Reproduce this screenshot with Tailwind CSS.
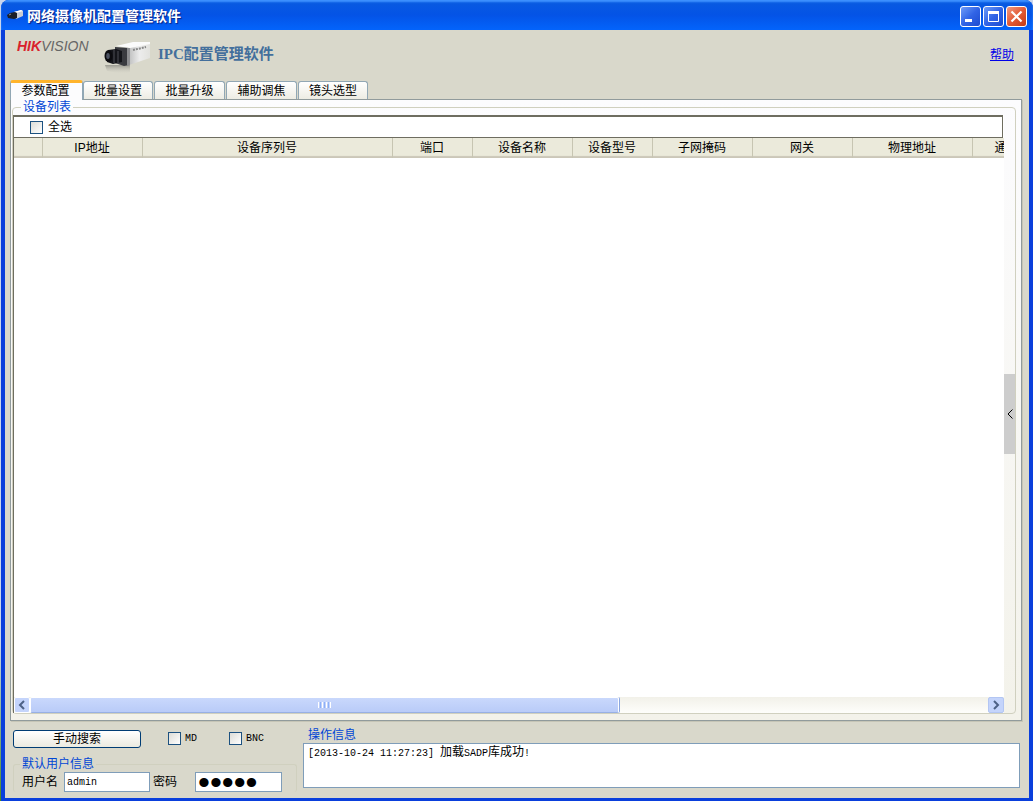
<!DOCTYPE html>
<html lang="zh-CN">
<head>
<meta charset="utf-8">
<meta name="viewport" content="width=device-width, initial-scale=1">
<title>网络摄像机配置管理软件</title>
<script src="https://cdn.jsdelivr.net/npm/@tailwindcss/browser@4"></script>
</head>
<body class="h-screen overflow-hidden bg-linear-to-b from-[#c9d6ee] from-80% to-[#4e8a1c] pl-px font-['Liberation_Sans','Noto_Sans_CJK_SC',sans-serif] text-xs text-black">
<div class="flex h-full flex-col overflow-hidden rounded-t-lg bg-[#0a3fdc]">

  <header class="flex h-[30px] shrink-0 items-center bg-linear-to-b from-[#0a5be0] via-[#0453e6] to-[#0364fc] pr-1.5 pl-1.5 shadow-[inset_0_2px_2px_#3f93ff]">
    <svg class="h-4 w-4 shrink-0" viewBox="0 0 16 16" aria-hidden="true">
      <path d="M7 5l7-2 2 1v5l-7 3z" fill="#c9ccd2"/><path d="M7 5l7-2 2 1-7 2z" fill="#fff"/>
      <path d="M0 8l3-2 5-1 2 1v5l-3 1-6-1z" fill="#1c1f26"/><path d="M2 8l2-1" stroke="#8a8f98"/>
    </svg>
    <h1 class="ml-1 flex-1 pt-0.5 text-sm leading-[20px] font-bold text-white [text-shadow:1px_1px_1px_#0a1f80]">网络摄像机配置管理软件</h1>
    <div class="mt-0.5 flex gap-0.5">
      <button type="button" aria-label="最小化" class="flex h-[21px] w-[21px] items-center justify-center rounded-[3px] border border-white bg-linear-to-br from-[#6f9bf7] via-[#3164e6] to-[#1d4bd0]">
        <svg class="h-[19px] w-[19px]" viewBox="0 0 19 19"><path d="M4 12h7v3H4z" fill="#fff"/></svg>
      </button>
      <button type="button" aria-label="最大化" class="flex h-[21px] w-[21px] items-center justify-center rounded-[3px] border border-white bg-linear-to-br from-[#6f9bf7] via-[#3164e6] to-[#1d4bd0]">
        <svg class="h-[19px] w-[19px]" viewBox="0 0 19 19"><path d="M4.500 5v9.500h10V5" fill="none" stroke="#fff"/><path d="M4 4h11v3H4z" fill="#fff"/></svg>
      </button>
      <button type="button" aria-label="关闭" class="flex h-[21px] w-[21px] items-center justify-center rounded-[3px] border border-white bg-linear-to-br from-[#f0997f] via-[#e25a35] to-[#c23a12]">
        <svg class="h-[19px] w-[19px]" viewBox="0 0 19 19"><path d="M4.500 4.500l10 10M14.500 4.500l-10 10" stroke="#fff" stroke-width="2.200"/></svg>
      </button>
    </div>
  </header>

  <main class="mr-1 mb-[3px] ml-1 flex min-h-0 flex-1 flex-col bg-[#d9d8cb]">
    <div class="flex h-[50px] shrink-0 pr-[15px] pl-3">
      <div class="mt-1.5 w-[71px] text-sm leading-[20px] font-bold text-[#d9222c] italic">HIK<span class="font-normal text-[#666]">VISION</span></div>
      <svg class="mt-2.5 ml-4 h-9 w-12" viewBox="0 0 48 36" aria-hidden="true">
        <defs>
          <linearGradient id="side" x1="0" y1="0" x2="1" y2="0"><stop offset="0" stop-color="#bfc0c0"/><stop offset=".5" stop-color="#ececec"/><stop offset="1" stop-color="#e2e2de"/></linearGradient>
          <linearGradient id="refl" x1="0" y1="0" x2="0" y2="1"><stop offset="0" stop-color="#8a8a82" stop-opacity=".8"/><stop offset="1" stop-color="#d9d8cb" stop-opacity="0"/></linearGradient>
        </defs>
        <path d="M1 25h25v7l-6 2-17-3z" fill="url(#refl)"/>
        <path d="M25 8l21-5v15l-21 7z" fill="url(#side)"/>
        <path d="M12 6l17-4 17 0v2l-20 4z" fill="#fbfbfb"/>
        <path d="M11 7l14 1v17l-5 1-9-3z" fill="#3a3b40"/>
        <path d="M23 8l3 0v17l-3 1z" fill="#8c8d90"/>
        <path d="M4 10l8-1 6 2v11l-9 2-6-2z" fill="#14151a"/>
        <ellipse cx="4.500" cy="16" rx="4" ry="6" fill="#0b0b0f"/>
        <ellipse cx="4" cy="16" rx="1.800" ry="3" fill="#4b5160"/>
        <path d="M10 10v13M14 11v12" stroke="#4c4e55"/>
        <path d="M29 10l13-3" stroke="#888" stroke-width="2" stroke-dasharray="2 1"/>
      </svg>
      <h2 class="mt-3.5 ml-1.5 flex-1 font-['Liberation_Serif','Noto_Sans_CJK_SC',serif] text-[15px] leading-[20px] font-bold text-[#436f9c]">IPC配置管理软件</h2>
      <a href="#help" class="mt-4 self-start leading-[19px] text-[#0000e8] underline">帮助</a>
    </div>

    <div role="tablist" class="flex h-[19px] shrink-0 items-end pl-[5px]">
      <button type="button" role="tab" aria-selected="true" class="z-10 -mb-px h-5 w-[73px] rounded-t-[3px] border-t-[3px] border-r border-l border-t-[#ffb42c] border-r-[#91a7b4] border-l-[#91a7b4] bg-[#fcfcfd] pr-0.5 pb-0.5 leading-[14px]">参数配置</button>
      <div class="flex gap-px">
        <button type="button" role="tab" aria-selected="false" class="h-[18px] w-[70px] rounded-t-[3px] border border-b-0 border-[#91a7b4] bg-linear-to-b from-white to-[#edece3] leading-[16px]">批量设置</button>
        <button type="button" role="tab" aria-selected="false" class="h-[18px] w-[71px] rounded-t-[3px] border border-b-0 border-[#91a7b4] bg-linear-to-b from-white to-[#edece3] leading-[16px]">批量升级</button>
        <button type="button" role="tab" aria-selected="false" class="h-[18px] w-[71px] rounded-t-[3px] border border-b-0 border-[#91a7b4] bg-linear-to-b from-white to-[#edece3] leading-[16px]">辅助调焦</button>
        <button type="button" role="tab" aria-selected="false" class="h-[18px] w-[70px] rounded-t-[3px] border border-b-0 border-[#91a7b4] bg-linear-to-b from-white to-[#edece3] leading-[16px]">镜头选型</button>
      </div>
    </div>

    <section role="tabpanel" class="mr-[7px] ml-[5px] flex min-h-0 flex-1 flex-col border border-[#919b9c] bg-linear-to-b from-[#fcfcfe] to-[#f3f2ea] pr-[5px] pb-1.5 pl-px shadow-[1px_1px_0_#c6c5b6]">
      <fieldset class="flex min-h-0 min-w-0 flex-1 flex-col rounded-[4px] border border-[#d0d0bf]">
        <legend class="ml-2 px-0.5 leading-[15px] text-[#0046d5]">设备列表</legend>
        <div class="flex min-h-0 flex-1">
          <div class="flex min-w-0 flex-1 flex-col border-l border-[#6e6d60] bg-white">
            <div class="mr-px flex h-[23px] shrink-0 items-center border border-t-2 border-l-0 border-[#6e6d60] pl-4">
              <label class="flex items-center gap-[5px] leading-[16px]"><input type="checkbox" class="h-[13px] w-[13px] appearance-none border border-[#1c5180] bg-linear-to-br from-[#dcdcd7] to-white">全选</label>
            </div>
            <div class="min-h-0 flex-1 overflow-hidden">
              <table class="w-[1040px] table-fixed border-collapse">
                <colgroup><col class="w-[28px]"><col class="w-[100px]"><col class="w-[250px]"><col class="w-[80px]"><col class="w-[100px]"><col class="w-[80px]"><col class="w-[100px]"><col class="w-[100px]"><col class="w-[120px]"><col></colgroup>
                <thead class="bg-[#ebeadb] shadow-[inset_0_-2px_1px_#cbc7b8]">
                  <tr class="h-5 leading-[19px] *:border-r *:border-[#c7c5b2] *:p-0 *:font-normal">
                    <th scope="col" aria-label="选择"></th><th scope="col">IP地址</th><th scope="col">设备序列号</th><th scope="col">端口</th><th scope="col">设备名称</th><th scope="col">设备型号</th><th scope="col">子网掩码</th><th scope="col">网关</th><th scope="col">物理地址</th><th scope="col" class="text-left"><span class="pl-[22px]">通</span></th>
                  </tr>
                </thead>
                <tbody></tbody>
              </table>
            </div>
            <div class="flex h-4 shrink-0 bg-linear-to-b from-[#f2f1e9] to-[#fefefb]">
              <button type="button" aria-label="向左滚动" class="flex w-4 items-center justify-center rounded-[2px] border border-white bg-[#c4d4fb]"><svg class="h-3 w-3" viewBox="0 0 12 12"><path d="M8 2L4 6l4 4" fill="none" stroke="#4d6185" stroke-width="2"/></svg></button>
              <div class="flex min-w-0 flex-1">
                <div class="flex flex-[588_588_0%] items-center justify-center gap-px rounded-[2px] border border-white border-b-[#98b0e4] bg-linear-to-b from-[#c9d8fc] to-[#b9cbf8] shadow-[1px_0_0_#8aa6e0]">
                  <i class="h-1.5 w-px bg-white"></i><i class="h-1.5 w-px bg-[#8cb0f8]"></i><i class="h-1.5 w-px bg-white"></i><i class="h-1.5 w-px bg-[#8cb0f8]"></i><i class="h-1.5 w-px bg-white"></i><i class="h-1.5 w-px bg-[#8cb0f8]"></i><i class="h-1.5 w-px bg-white"></i>
                </div>
                <div class="flex-[370_370_0%]"></div>
              </div>
              <button type="button" aria-label="向右滚动" class="flex w-4 items-center justify-center rounded-[2px] border border-[#b3c6f3] bg-[#c4d4fb]"><svg class="h-3 w-3" viewBox="0 0 12 12"><path d="M4 2l4 4-4 4" fill="none" stroke="#4d6185" stroke-width="2"/></svg></button>
            </div>
          </div>
          <button type="button" aria-label="展开面板" class="flex h-20 w-[11px] shrink-0 items-center justify-center self-center bg-[#cdcdcd]"><svg class="h-3 w-2" viewBox="0 0 8 12"><path d="M6.500 1.500L2 6l4.500 4.500" fill="none" stroke="#000"/></svg></button>
        </div>
      </fieldset>
    </section>

    <footer class="flex h-[77px] shrink-0 pr-[9px] pl-2">
      <div class="flex w-[284px] shrink-0 flex-col pt-[9px]">
        <div class="flex h-[18px] items-center">
          <button type="button" class="h-[18px] w-32 rounded-[3px] border border-[#003c74] bg-linear-to-b from-white to-[#ebeae0] leading-[16px]">手动搜索</button>
          <label class="ml-[27px] flex w-[61px] items-center gap-1 font-['Liberation_Mono',monospace] text-[10px]"><input type="checkbox" class="h-[13px] w-[13px] appearance-none border border-[#1c5180] bg-linear-to-br from-[#dcdcd7] to-white">MD</label>
          <label class="flex items-center gap-1 font-['Liberation_Mono',monospace] text-[10px]"><input type="checkbox" class="h-[13px] w-[13px] appearance-none border border-[#1c5180] bg-linear-to-br from-[#dcdcd7] to-white">BNC</label>
        </div>
        <fieldset class="mt-2 min-w-0 rounded-[3px] border border-b-0 border-[#d0d0bf]">
          <legend class="ml-1.5 px-0.5 leading-[16px] text-[#0046d5]">默认用户信息</legend>
          <div class="flex items-center pl-2">
            <label for="user" class="w-[42px]">用户名</label>
            <input id="user" type="text" value="admin" class="h-5 w-[86px] border border-[#7f9db9] bg-white pl-0.5 font-['Liberation_Mono',monospace] text-[10px]">
            <label for="pass" class="ml-[3px] w-[42px]">密码</label>
            <input id="pass" type="password" value="12345" class="h-5 w-[87px] border border-[#7f9db9] bg-white pl-0.5 font-['Liberation_Sans',sans-serif] text-[34px] leading-[18px]">
          </div>
        </fieldset>
      </div>
      <fieldset class="mt-[7px] ml-1 min-w-0 flex-1">
        <legend class="ml-[5px] px-0.5 leading-[15px] text-[#0046d5]">操作信息</legend>
        <div role="log" class="ml-0.5 h-[45px] border border-[#7f9db9] bg-white pl-1 leading-[16px]"><span class="font-['Liberation_Mono',monospace] text-[10px]">[2013-10-24 11:27:23] </span>加载<span class="font-['Liberation_Mono',monospace] text-[10px]">SADP</span>库成功<span class="font-['Liberation_Mono',monospace] text-[10px]">!</span></div>
      </fieldset>
    </footer>
  </main>
</div>
</body>
</html>
